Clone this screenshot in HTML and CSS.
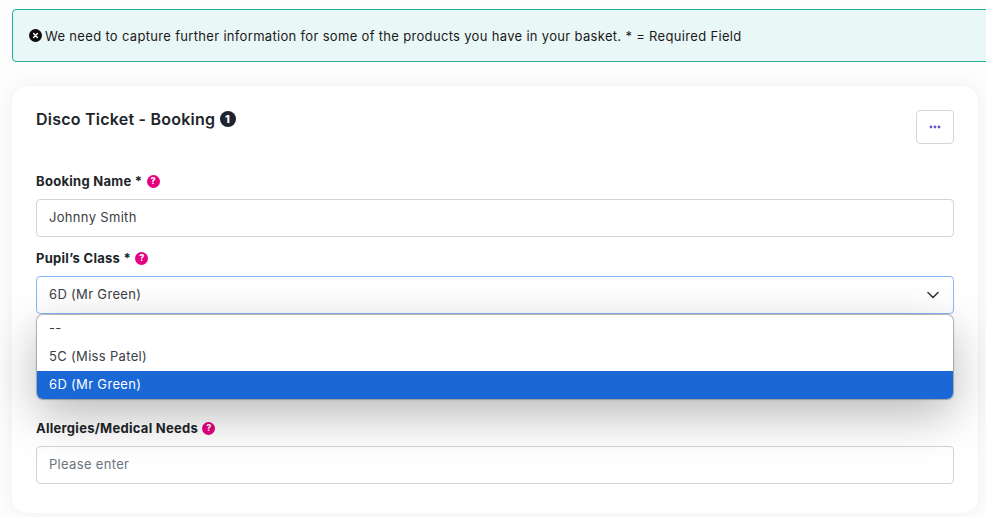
FILE: index.html
```html
<!DOCTYPE html>
<html lang="en">
<head>
<meta charset="utf-8">
<title>Disco Ticket - Booking</title>
<link rel="stylesheet" href="styles.css">
</head>
<body>
<div class="alert">
  <svg class="alert-icon" viewBox="0 0 13 13" width="13" height="13"><circle cx="6.5" cy="6.5" r="6.5" fill="#0c0c0c"/><path d="M4.6 4.6l3.8 3.8M8.4 4.6l-3.8 3.8" stroke="#fff" stroke-width="1.4" stroke-linecap="round"/></svg>
  <span>We need to capture further information for some of the products you have in your basket. * = Required Field</span>
</div>
<main class="card">
  <header class="card-head">
    <h2 class="title">Disco Ticket - Booking <span class="count">1</span></h2>
    <button class="more" type="button" aria-label="More">
      <svg viewBox="0 0 12 4" width="12" height="4"><circle cx="2" cy="2" r="1.4" fill="#6a55c4"/><circle cx="6" cy="2" r="1.4" fill="#6a55c4"/><circle cx="10" cy="2" r="1.4" fill="#6a55c4"/></svg>
    </button>
  </header>
  <div class="field">
    <label class="label">Booking Name * <span class="help">?</span></label>
    <div class="input">Johnny Smith</div>
  </div>
  <div class="field">
    <label class="label">Pupil’s Class * <span class="help">?</span></label>
    <div class="select-wrap">
      <div class="input select">
        <span>6D (Mr Green)</span>
        <svg viewBox="0 0 12 8" width="12" height="8"><path d="M1 1.5l5 5 5-5" fill="none" stroke="#343a40" stroke-width="1.6" stroke-linecap="round" stroke-linejoin="round"/></svg>
      </div>
      <ul class="menu">
        <li class="option">--</li>
        <li class="option">5C (Miss Patel)</li>
        <li class="option selected">6D (Mr Green)</li>
      </ul>
    </div>
  </div>
  <div class="covered"></div>
  <div class="field last">
    <label class="label">Allergies/Medical Needs <span class="help">?</span></label>
    <div class="input placeholder">Please enter</div>
  </div>
</main>
</body>
</html>
```
FILE: styles.css
```css
* { box-sizing: border-box; }
html, body { margin: 0; padding: 0; }
body {
  width: 986px;
  height: 517px;
  overflow: hidden;
  background: #fdfdfd;
  padding: 9px 8px 0 12px;
  font-family: "Inter", "Open Sans", sans-serif;
  color: #212529;
}
.alert {
  display: flex;
  align-items: center;
  gap: 3px;
  height: 53px;
  width: 990px;
  padding: 0 16px;
  background: #eaf7f7;
  border: 1px solid #20ae96;
  border-radius: 4px;
  font-size: 13px;
  letter-spacing: 0.32px;
  color: #1a1a1a;
  white-space: nowrap;
}
.alert-icon { flex: none; }
.card {
  margin-top: 24px;
  width: 966px;
  height: 427px;
  padding: 23px 24px 0;
  background: #fff;
  border-radius: 16px;
  box-shadow: 0 0 20px rgba(0, 0, 0, 0.06);
}
.card-head {
  display: flex;
  justify-content: space-between;
  align-items: flex-start;
  height: 63px;
}
.title {
  display: flex;
  align-items: center;
  gap: 0;
  margin: 0;
  height: 20px;
  font-size: 16px;
  font-weight: 600;
  letter-spacing: 0.23px;
  line-height: 20px;
  color: #212529;
  white-space: pre;
}
.count {
  display: inline-flex;
  align-items: center;
  justify-content: center;
  width: 16px;
  height: 16px;
  border-radius: 50%;
  background: #1e2430;
  color: #fff;
  font-size: 11px;
  font-weight: 800;
  letter-spacing: 0;
}
.more {
  display: flex;
  align-items: center;
  justify-content: center;
  width: 38px;
  height: 34px;
  margin-top: 1px;
  padding: 0;
  background: #fff;
  border: 1px solid #d6d6d6;
  border-radius: 4px;
}
.field { margin-bottom: 12px; }
.label {
  display: flex;
  align-items: center;
  gap: 1px;
  height: 18px;
  margin-bottom: 9px;
  font-size: 13px;
  font-weight: 700;
  letter-spacing: 0.28px;
  line-height: 18px;
  color: #212529;
  white-space: pre;
}
.help {
  display: inline-flex;
  align-items: center;
  justify-content: center;
  width: 13px;
  height: 13px;
  border-radius: 50%;
  background: #e6007e;
  color: #fff;
  font-size: 9px;
  font-weight: 800;
  letter-spacing: 0;
}
.input {
  display: flex;
  align-items: center;
  height: 38px;
  padding: 0 12px 2px;
  background: #fff;
  border: 1px solid #ced4da;
  border-radius: 4px;
  font-size: 13px;
  letter-spacing: 0.32px;
  color: #3a4046;
}
.placeholder { color: #6c757d; }
.select-wrap { position: relative; }
.select {
  justify-content: space-between;
  border-color: #86b7fe;
  padding-right: 14px;
}
.select svg { margin-top: 2px; }
.menu {
  position: absolute;
  top: 39px;
  left: 1px;
  right: 1px;
  z-index: 2;
  margin: 0;
  padding: 0;
  list-style: none;
  background: #fff;
  border-radius: 6px;
  overflow: hidden;
  box-shadow: 0 0 1px 1px rgba(90, 90, 90, 0.45), 0 16px 48px rgba(0, 0, 0, 0.28);
}
.option {
  display: flex;
  align-items: center;
  height: 28px;
  padding: 0 12px 2px;
  font-size: 13px;
  letter-spacing: 0.32px;
  color: #3a4046;
}
.selected { background: #1a67d6; color: #fff; }
.covered { height: 93px; }
.last { margin-bottom: 0; }
```
